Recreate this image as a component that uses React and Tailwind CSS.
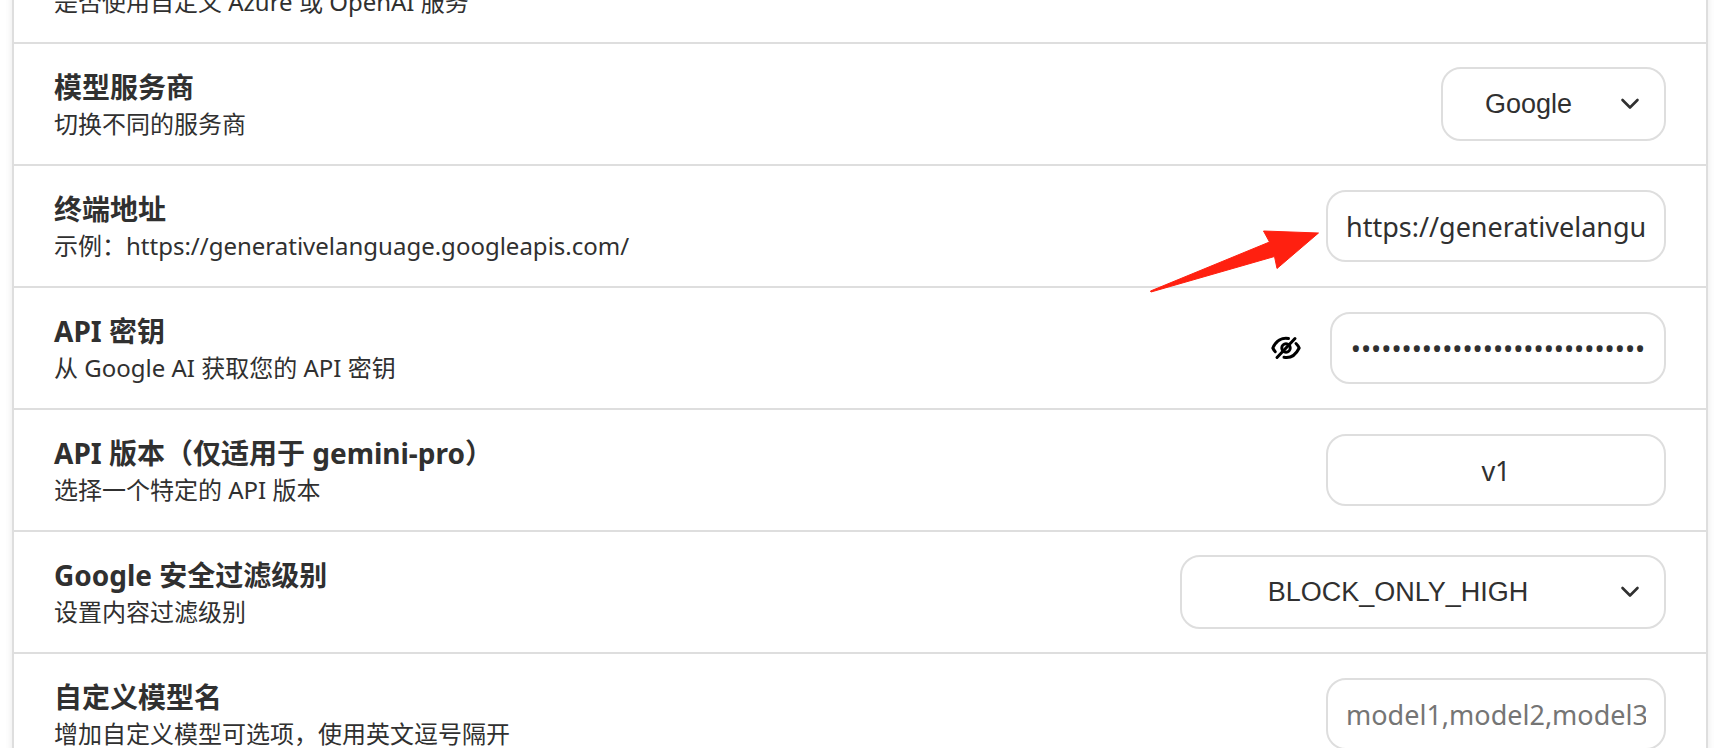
const fieldBase =
  "h-[72px] rounded-[20px] border-2 border-[#dedede] bg-white px-[18px] text-center text-[27px] text-[#303030] placeholder:text-[#757575] outline-none";

const ListItem = ({ id, title, subTitle, children }) => (
  <div className="flex min-h-[122px] items-center justify-between border-b-2 border-[#dedede] px-10">
    <label htmlFor={id} className="flex flex-col">
      <span className="text-[28px] leading-10 font-bold">{title}</span>
      <span className="text-2xl leading-[34px]">{subTitle}</span>
    </label>
    {children}
  </div>
);

const Select = ({ id, width, options }) => (
  <div className="relative">
    <select
      id={id}
      className={`h-[74px] appearance-none rounded-[20px] border-2 border-[#dedede] bg-white pr-[70px] pl-5 text-center font-['Liberation_Sans',sans-serif] text-[27px] text-[#303030] outline-none ${width}`}
    >
      {options.map((option) => (
        <option key={option}>{option}</option>
      ))}
    </select>
    <svg
      className="pointer-events-none absolute top-1/2 right-6 h-6 w-6 -translate-y-1/2"
      viewBox="0 0 24 24"
      fill="none"
      stroke="#303030"
      strokeWidth="2.6"
      strokeLinecap="round"
      strokeLinejoin="round"
      aria-hidden="true"
    >
      <path d="M4.500 8 12 15.500 19.500 8" />
    </svg>
  </div>
);

const EyeOffIcon = () => (
  <svg
    className="h-8 w-8"
    viewBox="0 0 32 32"
    fill="none"
    stroke="#000"
    strokeWidth="3"
    strokeLinecap="round"
    strokeLinejoin="round"
    aria-hidden="true"
  >
    <path d="M18.500 6.500C12 5.200 6 9 2.800 16c.7 1.500 1.500 2.700 2.500 3.700" />
    <path d="M26 11.500c1.400 1.300 2.500 2.700 3.200 4.500-3.500 7-9 10.500-15.200 9.300" />
    <circle cx="16" cy="16" r="4.200" />
    <path d="M25 6.500 7 25.500" />
  </svg>
);

const Arrow = () => (
  <svg
    className="pointer-events-none absolute top-[39px] right-full mr-[6px] h-[64px] w-[172px]"
    viewBox="0 0 172 64"
    fill="#ff2010"
    stroke="#ff2010"
    strokeWidth="1"
    strokeLinejoin="round"
    aria-hidden="true"
  >
    <path d="M2.500 62 121.500 13 115.500 2 170.500 4 129 39.500 126.500 27.500 3 63Z" />
  </svg>
);

const App = () => {
  return (
    <main className="h-screen overflow-hidden bg-white pr-[10px] pl-3 font-['Noto_Sans','Noto_Sans_CJK_SC',sans-serif] text-[#303030]">
      <div className="border-x-2 border-[#dedede] shadow-[0_4px_8px_rgba(0,0,0,0.05),0_4px_8px_rgba(0,0,0,0.05)]">
        <div className="-mt-[15px] border-b-2 border-[#dedede] px-10 pb-[23px]">
          <p className="text-2xl leading-[34px]">是否使用自定义 Azure 或 OpenAI 服务</p>
        </div>

        <ListItem id="provider" title="模型服务商" subTitle="切换不同的服务商">
          <Select id="provider" width="w-[225px]" options={["Google", "OpenAI", "Azure"]} />
        </ListItem>

        <ListItem
          id="endpoint"
          title="终端地址"
          subTitle="示例：https://generativelanguage.googleapis.com/"
        >
          <div className="relative">
            <Arrow />
            <input
              id="endpoint"
              type="text"
              className={`${fieldBase} w-[340px]`}
              defaultValue="https://generativelanguage.googleapis.com/"
            />
          </div>
        </ListItem>

        <ListItem id="api-key" title="API 密钥" subTitle="从 Google AI 获取您的 API 密钥">
          <div className="flex items-center gap-7">
            <button type="button" aria-label="显示密钥">
              <EyeOffIcon />
            </button>
            <input
              id="api-key"
              type="password"
              className={`${fieldBase} w-[336px]`}
              defaultValue="abcdefghijklmnopqrstuvwxyz012"
            />
          </div>
        </ListItem>

        <ListItem
          id="api-version"
          title="API 版本（仅适用于 gemini-pro）"
          subTitle="选择一个特定的 API 版本"
        >
          <input id="api-version" type="text" className={`${fieldBase} w-[340px]`} defaultValue="v1" />
        </ListItem>

        <ListItem id="safety" title="Google 安全过滤级别" subTitle="设置内容过滤级别">
          <Select
            id="safety"
            width="w-[486px]"
            options={["BLOCK_ONLY_HIGH", "BLOCK_NONE", "BLOCK_MEDIUM_AND_ABOVE"]}
          />
        </ListItem>

        <ListItem
          id="custom-model"
          title="自定义模型名"
          subTitle="增加自定义模型可选项，使用英文逗号隔开"
        >
          <input
            id="custom-model"
            type="text"
            className={`${fieldBase} w-[340px]`}
            placeholder="model1,model2,model3"
          />
        </ListItem>
      </div>
    </main>
  );
};

export default App;
